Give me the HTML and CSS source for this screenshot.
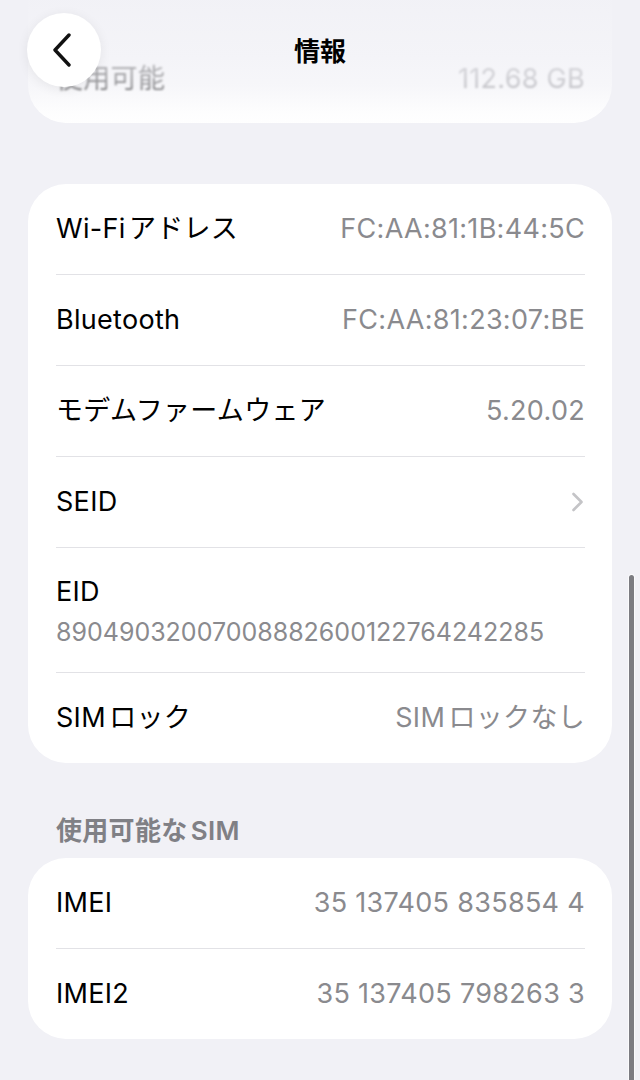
FILE: index.html
```html
<!DOCTYPE html>
<html lang="ja">
<head>
<meta charset="utf-8">
<title>情報</title>
<link rel="stylesheet" href="styles.css">
</head>
<body>
<div class="screen">
  <div class="content">
    <div class="card card-faded">
      <div class="row row-faded">
        <span class="label">使用可能</span>
        <span class="value">112.68 GB</span>
      </div>
    </div>

    <div class="card card-main">
      <div class="row">
        <span class="label">Wi-Fiアドレス</span>
        <span class="value">FC:AA:81:1B:44:5C</span>
      </div>
      <div class="row">
        <span class="label">Bluetooth</span>
        <span class="value">FC:AA:81:23:07:BE</span>
      </div>
      <div class="row">
        <span class="label">モデムファームウェア</span>
        <span class="value">5.20.02</span>
      </div>
      <div class="row">
        <span class="label">SEID</span>
        <svg class="chevron" width="13" height="20" viewBox="0 0 13 20"><path d="M2.5 2 L10.5 10 L2.5 18" fill="none" stroke="#c4c4c7" stroke-width="2.6" stroke-linecap="round" stroke-linejoin="round"/></svg>
      </div>
      <div class="row row-stack">
        <span class="label">EID</span>
        <span class="subvalue">89049032007008882600122764242285</span>
      </div>
      <div class="row">
        <span class="label">SIMロック</span>
        <span class="value">SIMロックなし</span>
      </div>
    </div>

    <div class="section-header">使用可能なSIM</div>

    <div class="card card-sim">
      <div class="row">
        <span class="label">IMEI</span>
        <span class="value">35 137405 835854 4</span>
      </div>
      <div class="row">
        <span class="label">IMEI2</span>
        <span class="value">35 137405 798263 3</span>
      </div>
    </div>
  </div>

  <div class="nav-fade"></div>
  <div class="nav">
    <div class="back-btn">
      <svg width="20" height="34" viewBox="0 0 20 34"><path d="M17 2 L3 17 L17 32" fill="none" stroke="#111" stroke-width="3.4" stroke-linecap="round" stroke-linejoin="round"/></svg>
    </div>
    <div class="nav-title">情報</div>
  </div>
  <div class="scrollbar"></div>
</div>
</body>
</html>
```
FILE: styles.css
```css
html, body {
  margin: 0;
  padding: 0;
}
body {
  background: #f1f1f6;
  font-family: "Inter", "Noto Sans CJK JP", sans-serif;
  color: #000;
  text-autospace: normal;
}
.screen {
  position: relative;
  width: 640px;
  height: 1080px;
  overflow: hidden;
  background: #f1f1f6;
}
.content {
  padding: 0 28px;
}
.card {
  background: #fff;
  border-radius: 38px;
  overflow: hidden;
}
.card-faded {
  margin-top: -60px;
  padding-top: 95px;
}
.card-main {
  margin-top: 61px;
}
.card-sim {
  margin-top: 12px;
}
.row {
  display: flex;
  align-items: center;
  justify-content: space-between;
  height: 90px;
  margin: 0 27px 0 28px;
  border-bottom: 1px solid #e2e2e6;
}
.row:last-child {
  border-bottom: none;
}
.row-faded {
  height: 88px;
  filter: blur(1.3px);
}
.row-stack {
  flex-direction: column;
  align-items: flex-start;
  justify-content: flex-start;
  height: auto;
  padding: 27px 0 26px;
}
.label {
  font-size: 27px;
  line-height: 34px;
  letter-spacing: 0.3px;
  color: #000;
}
.value {
  font-size: 27px;
  line-height: 34px;
  letter-spacing: 0.3px;
  color: #8a8a8e;
}
.subvalue {
  margin-top: 9px;
  font-size: 25px;
  line-height: 28px;
  letter-spacing: 0;
  color: #8a8a8e;
}
.chevron {
  display: block;
  margin-right: 1px;
}
.section-header {
  padding: 53px 0 0 28px;
  height: 30px;
  font-size: 26px;
  line-height: 30px;
  font-weight: 600;
  letter-spacing: 0.3px;
  color: #808085;
}
.nav-fade {
  position: absolute;
  left: 0;
  top: 0;
  width: 640px;
  height: 128px;
  background: linear-gradient(to bottom,
    rgba(241,241,246,0.97) 0px,
    rgba(241,241,246,0.8) 55px,
    rgba(241,241,246,0.62) 85px,
    rgba(241,241,246,0.15) 112px,
    rgba(241,241,246,0) 128px);
}
.nav {
  position: absolute;
  left: 0;
  top: 0;
  width: 640px;
  height: 100px;
}
.back-btn {
  position: absolute;
  left: 27px;
  top: 13px;
  width: 74px;
  height: 74px;
  border-radius: 50%;
  background: #fff;
  box-shadow: 0 2px 12px rgba(0,0,0,0.07);
  display: flex;
  align-items: center;
  justify-content: center;
}
.back-btn svg {
  margin-left: -4px;
}
.nav-title {
  position: absolute;
  left: 0;
  right: 0;
  top: 33px;
  text-align: center;
  font-family: "Noto Sans CJK JP", sans-serif;
  font-size: 26px;
  line-height: 34px;
  font-weight: 700;
  color: #000;
}
.scrollbar {
  position: absolute;
  left: 629px;
  top: 575px;
  width: 5px;
  height: 540px;
  border-radius: 3px;
  background: #7c7c81;
  box-shadow: 0 0 0 1px rgba(255,255,255,0.7);
}
```
